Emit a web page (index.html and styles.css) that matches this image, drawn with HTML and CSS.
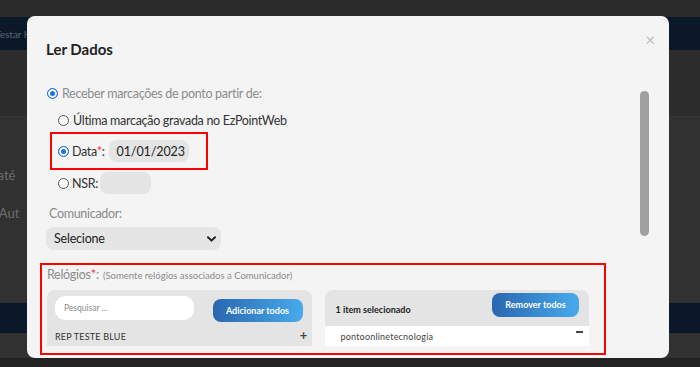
FILE: index.html
```html
<!DOCTYPE html>
<html lang="pt">
<head>
<meta charset="utf-8">
<title>Ler Dados</title>
<link rel="stylesheet" href="styles.css">
</head>
<body>
<div class="page">
  <div class="top-strip"></div>
  <div class="navbar"><span class="nav-text">Testar Hora</span></div>
  <div class="sub-bar"></div>
  <div class="page-content">
    <div class="bg-line bg-line-1">Data até</div>
    <div class="bg-line bg-line-2">Relógios Aut</div>
    <div class="bg-band"></div>
  </div>
  <div class="bottom-strip"></div>
</div>

<div class="modal">
  <div class="modal-header">
    <h2 class="modal-title">Ler Dados</h2>
    <span class="modal-close">×</span>
  </div>
  <div class="modal-body">
    <div class="form">
      <div class="row row-main">
        <span class="radio checked"></span>
        <span class="label-muted">Receber marcações de ponto partir de:</span>
      </div>
      <div class="row row-opt row-2">
        <span class="radio"></span>
        <span class="label-dark">Última marcação gravada no EzPointWeb</span>
      </div>
      <div class="highlight-date">
        <span class="radio checked"></span>
        <span class="label-dark">Data<span class="req">*</span>:</span>
        <span class="field field-date">01/01/2023</span>
      </div>
      <div class="row row-opt row-4">
        <span class="radio"></span>
        <span class="label-dark">NSR:</span>
        <span class="field field-nsr"></span>
      </div>
      <div class="label-comm">Comunicador:</div>
      <div class="select">
        <span>Selecione</span>
        <svg class="chev" width="9" height="6" viewBox="0 0 9 6"><path d="M1 1.2 L4.5 4.6 L8 1.2" fill="none" stroke="#222" stroke-width="2" stroke-linecap="round" stroke-linejoin="round"/></svg>
      </div>
      <div class="highlight-clocks">
        <div class="clocks-label"><span class="label-muted">Relógios</span><span class="req">*</span><span class="label-muted">:</span> <span class="hint">(Somente relógios associados a Comunicador)</span></div>
        <div class="panels">
          <div class="panel">
            <div class="panel-head">
              <div class="search">Pesquisar ...</div>
              <div class="btn">Adicionar todos</div>
            </div>
            <div class="panel-item">
              <span>REP TESTE BLUE</span>
              <span class="sign">+</span>
            </div>
          </div>
          <div class="panel">
            <div class="panel-head panel-head-right">
              <span class="count">1 item selecionado</span>
              <div class="btn btn-remove">Remover todos</div>
            </div>
            <div class="panel-item selected-item">
              <span>pontoonlinetecnologia</span>
              <span class="minus"></span>
            </div>
          </div>
        </div>
      </div>
    </div>
    <div class="scroll-track"><div class="scroll-thumb"></div></div>
  </div>
</div>
</body>
</html>
```

FILE: styles.css
```css
* { box-sizing: border-box; }
html, body {
  margin: 0;
  padding: 0;
  width: 700px;
  height: 367px;
  overflow: hidden;
  background: #222222;
  font-family: "Lato", "Open Sans", sans-serif;
}

/* Underlying dimmed page */
.page {
  display: flex;
  flex-direction: column;
  height: 367px;
}
.top-strip { height: 17px; background: #2a2a2b; }
.navbar {
  height: 33px;
  background: #0b1828;
  display: flex;
  align-items: center;
}
.nav-text {
  color: #5d6875;
  font-size: 10px;
  margin-left: -5px;
}
.sub-bar {
  height: 67px;
  background: #2c2c2c;
  border-bottom: 1px solid #363636;
}
.page-content {
  flex: 1;
  background: #313131;
  display: flex;
  flex-direction: column;
}
.bg-line {
  color: #6c6c6c;
  font-size: 13px;
  white-space: nowrap;
}
.bg-line-1 { margin-top: 50px; margin-left: -33px; }
.bg-line-2 { margin-top: 22px; margin-left: -52px; }
.bg-band {
  margin-top: 82px;
  height: 30px;
  background: #0b1828;
}
.bottom-strip { height: 9px; background: #222222; }

/* Modal */
.modal {
  position: absolute;
  left: 27px;
  top: 16px;
  width: 642px;
  height: 342px;
  background: #f4f4f4;
  border-radius: 8px;
  overflow: hidden;
}
.modal-header {
  height: 64px;
  padding: 23px 0 0 19px;
  position: relative;
}
.modal-title {
  margin: 0;
  font-size: 15px;
  line-height: 20px;
  font-weight: 700;
  color: #222;
}
.modal-close {
  position: absolute;
  right: 14px;
  top: 14px;
  font-size: 17px;
  line-height: 20px;
  color: #bdbdbd;
}
.modal-body {
  display: flex;
  padding-left: 19px;
}
.form {
  width: 560px;
  display: flex;
  flex-direction: column;
  align-items: flex-start;
}
.scroll-track {
  margin-left: auto;
  margin-right: 20px;
  width: 9px;
}
.scroll-thumb {
  margin-top: 11px;
  height: 145px;
  width: 9px;
  background: #a0a0a0;
  border-radius: 5px;
}

.row {
  display: flex;
  align-items: center;
  gap: 4px;
}
.row-main { height: 26px; margin-left: 1px; }
.row-opt { margin-left: 12px; }
.row-2 { height: 22px; margin-top: 3px; }
.row-4 { height: 22px; margin-top: 2px; gap: 3px; }

.radio {
  width: 11px;
  height: 11px;
  border-radius: 50%;
  border: 1px solid #555;
  background: #fff;
  flex: none;
}
.radio.checked {
  border: 1px solid #1a6fe6;
  background: #1a6fe6;
  box-shadow: inset 0 0 0 2px #fff;
}
.label-muted { color: #8b8b8b; font-size: 12.5px; letter-spacing: -0.3px; }
.label-dark { color: #333; font-size: 12.5px; letter-spacing: -0.3px; }
.req { color: #e53935; font-size: 12.5px; }

.highlight-date {
  margin-top: 1px;
  margin-left: 4px;
  width: 158px;
  height: 38px;
  border: 2px solid #ff0000;
  display: flex;
  align-items: center;
  padding-left: 6px;
  gap: 3px;
}
.field {
  background: #e4e4e4;
  border-radius: 8px;
  height: 22px;
  display: flex;
  align-items: center;
  color: #222;
  font-size: 12.5px;
  letter-spacing: -0.1px;
}
.field-date { width: 80px; padding-left: 8px; margin-left: 1px; }
.field-nsr { width: 51px; margin-left: -1px; }

.label-comm {
  margin-top: 11px;
  margin-left: 3px;
  height: 18px;
  line-height: 18px;
  color: #8b8b8b;
  font-size: 12.5px;
  letter-spacing: -0.3px;
}
.select {
  margin-top: 4px;
  width: 175px;
  height: 23px;
  background: #e5e5e5;
  border-radius: 8px;
  display: flex;
  align-items: center;
  justify-content: space-between;
  padding: 0 5px 0 8px;
  color: #222;
  font-size: 12.5px;
  letter-spacing: -0.2px;
}

.highlight-clocks {
  margin-top: 13px;
  margin-left: -6px;
  width: 566px;
  border: 2px solid #ff0000;
  padding: 0 15px 7px 5px;
}
.clocks-label {
  height: 16px;
  line-height: 16px;
  white-space: nowrap;
}
.hint { color: #8b8b8b; font-size: 9.5px; }
.panels {
  margin-top: 9px;
  display: flex;
  gap: 13px;
  height: 56px;
}
.panel {
  flex: 1;
  background: #e4e4e4;
  border-radius: 8px 8px 0 0;
  overflow: hidden;
  display: flex;
  flex-direction: column;
}
.panel-head {
  height: 36px;
  display: flex;
  justify-content: space-between;
  align-items: flex-start;
  padding: 6px 9px 0 8px;
}
.search {
  width: 139px;
  height: 24px;
  background: #fff;
  border-radius: 10px;
  color: #8a8a8a;
  font-size: 8.5px;
  display: flex;
  align-items: center;
  padding-left: 9px;
}
.btn {
  margin-top: 3px;
  width: 90px;
  height: 23px;
  border-radius: 8px;
  background: linear-gradient(90deg, #2a67b1, #47abeb);
  color: #fff;
  font-weight: 700;
  font-size: 9px;
  display: flex;
  align-items: center;
  justify-content: center;
}
.panel-head-right {
  align-items: center;
  padding: 0 10px 0 11px;
}
.count { font-size: 9px; font-weight: 700; color: #222; margin-top: 3px; }
.btn-remove { margin-top: -7px; width: 87px; height: 24px; }
.panel-item {
  flex: 1;
  display: flex;
  justify-content: space-between;
  align-items: center;
  padding: 0 4px 0 8px;
  font-size: 9px;
  color: #333;
  letter-spacing: 0.2px;
}
.sign { font-size: 13px; font-weight: 700; color: #444; margin-top: -3px; }
.selected-item {
  background: #fff;
  padding: 0 6px 0 16px;
  color: #444;
}
.minus {
  width: 7px;
  height: 2px;
  background: #444;
  margin-top: -8px;
}
```
